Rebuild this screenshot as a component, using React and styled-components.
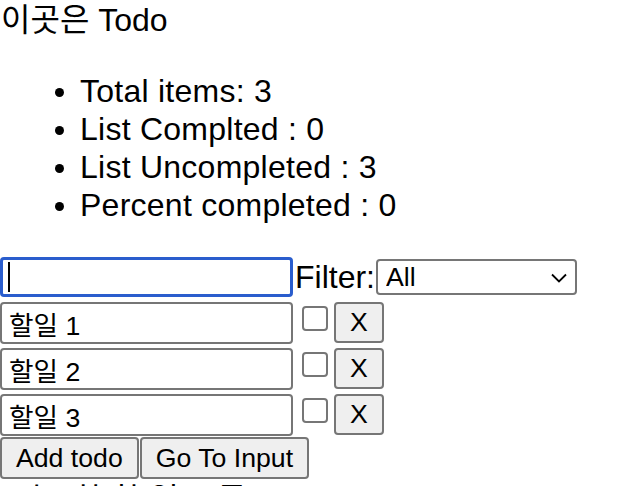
import React from "react";
import styled, { createGlobalStyle } from "styled-components";

const Global = createGlobalStyle`
  html, body { margin: 0; padding: 0; background: #fff; }
  body {
    font-family: "Liberation Sans", Arial, "Noto Sans CJK KR", sans-serif;
    color: #000;
    overflow: hidden;
  }
`;

const Page = styled.div`
  display: flex;
  flex-direction: column;
`;

const Title = styled.div`
  font-size: 32px;
  line-height: 40px;
  padding-left: 1px;
`;

const Stats = styled.ul`
  margin: 32px 0;
  padding-left: 80px;
  font-size: 32px;
  line-height: 38px;
  li { letter-spacing: 0.25px; }
  li::marker { font-size: 30px; }
`;

const TopRow = styled.div`
  display: flex;
  align-items: center;
  height: 42px;
`;

const InputWrap = styled.div`
  position: relative;
  display: flex;
`;

const TextBox = styled.input`
  box-sizing: border-box;
  width: ${(p) => p.$w || 293}px;
  height: ${(p) => p.$h || 42}px;
  margin: 0;
  padding: 0 7px;
  font-family: "Liberation Sans", Arial, "Noto Sans CJK KR", sans-serif;
  font-size: 26.67px;
  color: #000;
  background: #fff;
  border: ${(p) => (p.$focus ? "3px solid #2a5dcd" : "2px solid #767676")};
  border-radius: 4px;
  outline: none;
`;

const Caret = styled.span`
  position: absolute;
  left: 8px;
  top: 5px;
  width: 2px;
  height: 30px;
  background: #000;
`;

const Label = styled.label`
  font-size: 32px;
  line-height: 38px;
  margin-left: 2px;
`;

const SelectWrap = styled.div`
  position: relative;
  display: flex;
  margin-left: 1px;
`;

const Select = styled.select`
  appearance: none;
  box-sizing: border-box;
  width: 201px;
  height: 36px;
  margin: 0;
  padding: 0 8px;
  font-family: "Liberation Sans", Arial, sans-serif;
  font-size: 26.67px;
  color: #000;
  background: #fff;
  border: 2px solid #767676;
  border-radius: 4px;
`;

const Chevron = styled.svg`
  position: absolute;
  right: 10px;
  top: 14px;
  pointer-events: none;
`;

const TodoList = styled.div`
  display: flex;
  flex-direction: column;
  gap: 4px;
  margin: 4px 0 1px;
`;

const TodoRow = styled.div`
  display: flex;
  align-items: flex-start;
  height: 42px;
`;

const Check = styled.input`
  appearance: none;
  box-sizing: border-box;
  width: 26px;
  height: 25px;
  margin: 4px 6px 0 9px;
  border: 2px solid #767676;
  border-radius: 4px;
  background: #fff;
`;

const Button = styled.button`
  box-sizing: border-box;
  height: ${(p) => p.$h || 42}px;
  margin: 0;
  padding: 0 ${(p) => p.$px || 14}px;
  font-family: "Liberation Sans", Arial, sans-serif;
  font-size: 26.67px;
  color: #000;
  background: #efefef;
  border: 2px solid #767676;
  border-radius: 4px;
  line-height: 1;
`;

const ButtonRow = styled.div`
  display: flex;
  gap: 1px;
`;

const Footer = styled.div`
  font-size: 32px;
  line-height: 38px;
  margin-top: 2px;
  padding-left: 14px;
`;

const todos = ["할일 1", "할일 2", "할일 3"];

export default function App() {
  return (
    <Page>
      <Global />
      <Title>이곳은 Todo</Title>
      <Stats>
        <li>Total items: 3</li>
        <li>List Complted : 0</li>
        <li>List Uncompleted : 3</li>
        <li>Percent completed : 0</li>
      </Stats>
      <TopRow>
        <InputWrap>
          <TextBox $focus $w={293} $h={40} defaultValue="" />
          <Caret />
        </InputWrap>
        <Label>Filter:</Label>
        <SelectWrap>
          <Select defaultValue="all">
            <option value="all">All</option>
            <option value="done">Completed</option>
            <option value="todo">Uncompleted</option>
          </Select>
          <Chevron width="16" height="10" viewBox="0 0 16 10">
            <path d="M1 1.5 L8 8.5 L15 1.5" fill="none" stroke="#000" strokeWidth="1.8" />
          </Chevron>
        </SelectWrap>
      </TopRow>
      <TodoList>
        {todos.map((t) => (
          <TodoRow key={t}>
            <TextBox defaultValue={t} />
            <Check type="checkbox" />
            <Button $h={41} $px={14}>X</Button>
          </TodoRow>
        ))}
      </TodoList>
      <ButtonRow>
        <Button>Add todo</Button>
        <Button>Go To Input</Button>
      </ButtonRow>
      <Footer>완료한 할 일 목록</Footer>
    </Page>
  );
}
